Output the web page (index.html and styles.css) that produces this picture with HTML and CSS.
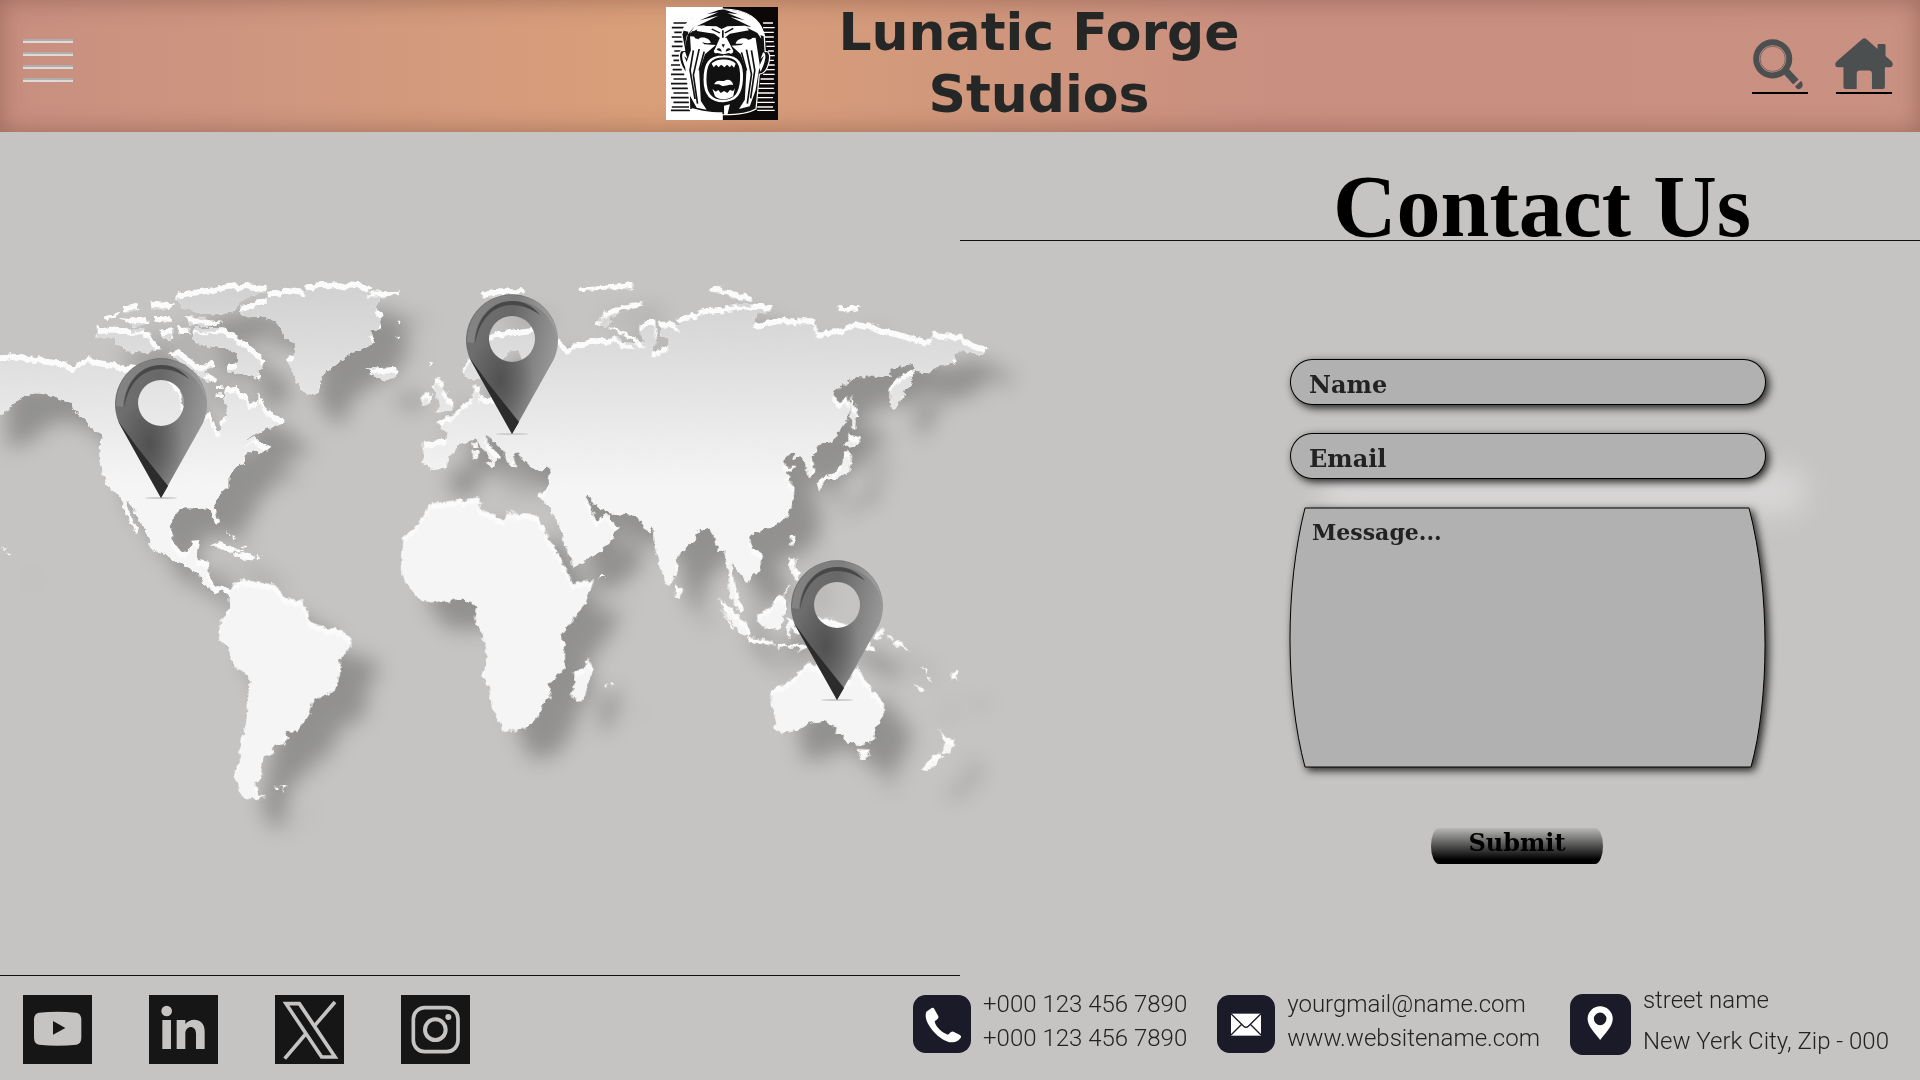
FILE: index.html
```html
<!DOCTYPE html>
<html lang="en">
<head>
<meta charset="utf-8">
<meta name="viewport" content="width=device-width, initial-scale=1">
<title>Contact Us</title>
<link rel="stylesheet" href="styles.css">
</head>
<body>
<header class="site-header">
  <button class="menu" type="button" aria-label="Menu"><span class="bar"></span><span class="bar"></span><span class="bar"></span><span class="bar"></span></button>
  <div class="brand">
    <svg class="logo" viewBox="0 0 270 339" preserveAspectRatio="none" aria-hidden="true">
      <path fill="#fff" d="M0 0h270v339H0z"/><path fill="#0c0807" d="M137 0h133v339H137z"/>
      <path stroke="#111" stroke-width="5" d="M18 48h34M14 62h36M20 76h28M14 90h32M20 104h25M14 118h26M20 132h16M14 146h18M18 160h14M12 174h22M16 188h22M12 202h32M18 216h36M12 230h42M14 244h42M18 258h38M12 272h46M18 286h40M14 300h44M12 310h46"/>
      <path stroke="#fff" stroke-width="4" d="M234 48h24M234 62h28M236 76h24M238 90h22M240 104h20M242 118h20M246 132h14M248 146h14M248 160h12M246 174h16M238 188h24M234 202h28M228 216h32M226 230h36M222 244h38M220 258h42M220 272h38M220 286h42M220 300h38M220 310h42"/>
      <path fill="#111" stroke="#fff" stroke-width="3" d="M38 82C45 40 80 6 137 6c56 0 94 30 100 84l2 44c12-4 14 20 6 44-4 16-12 22-20 24l-8 104c-30 22-122 24-160 2l-2-106c-16-10-28-50-20-70l10-2z"/>
      <path fill="#fff" d="M46 134c-12 0-8 30 6 60l2-18-10-28 8 8zM234 136c10 2 6 30-6 58l-4-14 12-34-8 10z"/>
      <path fill="#fff" d="M38 70C62 20 98 4 134 6L98 22l28-6-44 24 44-14-52 32 22-4-38 24 12-22-20 30-6 40 10-52z"/>
      <path fill="#fff" d="M240 90C226 30 190 8 142 8l32 14-26-4 42 22-34-10 50 30-20-4 38 24-12-18 18 34 6 36-8-48z"/>
      <path fill="#fff" d="M78 56l44 2 12 8 14-8 44-2 8 14-46 10-18 18-20-18-42-8z"/>
      <path fill="#fff" d="M58 88l20 2 14 22 28 2-26 28-14 50 4 90 14 26-24-6-20-44-8-80 14-48zM216 92l-20 2-14 20-24 2 22 26 14 46-4 90-14 28 26-8 14-48 10-76z"/>
      <path fill="none" stroke="#111" stroke-width="4" d="M66 130l-8 60 12 86M80 126l-14 78 10 86M92 134l-12 56M206 130l8 60-10 84M194 128l12 74-10 88M182 136l12 54M110 66l20 12M162 64l-20 14M137 70v24"/>
      <path fill="#111" d="M62 72l50 12 16 20-8 8-50-18zM214 74l-52 10-14 20 8 8 50-16z"/>
      <path fill="#fff" d="M78 96c10-10 28-2 30 12-14 2-24-2-30-12zM198 98c-10-10-28-2-30 12 14 2 24-2 30-12z"/>
      <path fill="#fff" d="M130 92l16 0 14 34c6 10-2 18-8 12l-14 4-14-4c-6 4-12-4-6-12z"/><path fill="#111" d="M122 128c4-8 12-4 12 6zM156 128c-4-8-12-4-12 6zM134 112l4 10 4-10z"/>
      <path fill="#111" stroke="#fff" stroke-width="7" d="M138 148c36-2 46 24 44 70-2 42-14 62-44 64-30 0-44-22-44-64 0-46 10-70 44-70z"/>
      <path fill="#fff" d="M110 170c10-16 46-18 58 0l-4 12-6-8-4 7-7-8-6 8-8-8-6 8-6-8-6 8zM112 246l8 8 6-5 6 9 8-6 8 6 6-9 8 3 4-8-4 24c-14 12-34 12-44 0zM116 232c6-18 18-8 24-10 10-8 20-2 22 12-12-4-20 6-28 2-6-6-12-4-18-4z"/>
      <path fill="#fff" d="M64 304c20 6 36 12 72 12v10c-36 0-66-6-80-18zM140 296l14-4-6 32h-8z"/>
    </svg>
    <h1 class="brand-name">Lunatic Forge<br>Studios</h1>
  </div>
  <nav class="tools">
    <a class="tool" href="#search" aria-label="Search"><svg class="tool-icon" viewBox="0 0 174 154" aria-hidden="true"><g transform="translate(5 3)"><circle cx="60" cy="60" r="50" fill="none" stroke="#4c4f50" stroke-width="18"/><circle cx="60" cy="60" r="38" fill="none" stroke="#4c4f50" stroke-width="2"/><path d="M100 97l30 33" stroke="#4c4f50" stroke-width="22"/><path fill="#4c4f50" d="M128 143l17-16c8 4 8 22-4 24-8 2-13-4-13-8z"/></g></svg></a>
    <a class="tool" href="#home" aria-label="Home"><svg class="tool-icon" viewBox="0 0 174 154" aria-hidden="true"><path fill="#4c4f50" d="M82 3q6-5 12 0l34 30V22q0-4 4-4h16q4 0 4 4v32l19 17q5 6 1 15-3 2-8 2h-14v60q0 6-6 6h-33v-46q0-10-10-10H75q-10 0-10 10v46H31q-6 0-6-6V88H9q-5 0-8-3-3-9 3-14z"/></svg></a>
  </nav>
</header>

<main class="content">
  <section class="map-panel">
    <svg class="map" viewBox="0 132 960 843" aria-hidden="true">
      <defs>
        <linearGradient id="land" gradientUnits="userSpaceOnUse" x1="0" y1="80" x2="0" y2="660"><stop offset="0" stop-color="#d2d2d2"/><stop offset="1" stop-color="#f5f5f5"/></linearGradient>
        <linearGradient id="pin-body" x1="0" y1=".2" x2="1" y2=".5"><stop offset="0" stop-color="#707070"/><stop offset=".45" stop-color="#686868"/><stop offset="1" stop-color="#9c9c9c"/></linearGradient>
        <radialGradient id="pin-shade" cx=".38" cy=".62" r=".36"><stop offset="0" stop-color="#4c4c4c" stop-opacity=".8"/><stop offset="1" stop-color="#4c4c4c" stop-opacity="0"/></radialGradient>
        <filter id="relief" filterUnits="userSpaceOnUse" x="-60" y="200" width="1160" height="680" color-interpolation-filters="sRGB">
          <feTurbulence type="fractalNoise" baseFrequency=".16" numOctaves="2" seed="4" result="noise"/>
          <feDisplacementMap in="SourceGraphic" in2="noise" scale="7" xChannelSelector="R" yChannelSelector="G" result="shape"/>
          <feOffset in="shape" dx="-1" dy="6" result="lower"/>
          <feComposite in="lower" in2="shape" operator="in" result="face"/>
          <feFlood flood-color="#fbfbfb"/><feComposite in2="shape" operator="in" result="edge"/>
          <feGaussianBlur in="shape" stdDeviation="10"/><feOffset dx="27" dy="28" result="soft"/>
          <feFlood flood-color="#000" flood-opacity=".26"/><feComposite in2="soft" operator="in" result="shadow"/>
          <feMerge><feMergeNode in="shadow"/><feMergeNode in="edge"/><feMergeNode in="face"/></feMerge>
        </filter>
        <g id="pin">
          <ellipse cx="0" cy="0" rx="16" ry="1" fill="#ccc"/>
          <path fill="url(#pin-body)" fill-rule="evenodd" d="M0 0L-42-75A46 46 0 1 1 42-75ZM23-95a23 23 0 1 0-46 0a23 23 0 1 0 46 0z"/>
          <path fill="url(#pin-shade)" fill-rule="evenodd" d="M0 0L-42-75A46 46 0 1 1 42-75ZM23-95a23 23 0 1 0-46 0a23 23 0 1 0 46 0z"/>
          <path fill="#2c2c2c" d="M0 0L-43-77-24-51 7-12z"/>
          <path fill="#fff" fill-opacity=".14" d="M-45-92C-44-121-25-139 0-139s42 17 45 42C40-121 22-133 0-133c-20 0-36 15-38 42z"/>
          <path fill="#484848" d="M-37-90C-36-118-18-133 0-133c12 0 22 6 28 14-8-6-18-10-28-10-16 0-32 11-37 39z"/>
        </g>
      </defs>
      <g filter="url(#relief)">
        <g transform="translate(0 260) scale(.3333)" fill="url(#land)">
          <path d="M-60 300L40 278 100 290 200 305 215 320 260 290 300 300 380 315 430 320 500 340 540 390 550 430 580 470 630 460 650 515 665 510 660 480 685 465 680 440 670 420 675 385 710 380 740 410 750 435 775 425 775 400 800 440 815 465 850 475 850 490 800 510 760 525 735 545 765 530 780 545 815 560 780 585 760 570 735 590 735 612 705 620 688 650 688 680 650 715 645 735 657 785 648 795 632 750 620 742 580 745 545 745 518 770 513 815 525 860 545 875 570 868 578 842 598 840 592 870 590 900 628 905 628 945 645 980 665 975 695 995 690 1012 665 990 645 1000 610 970 596 940 530 905 450 860 445 830 420 780 385 725 375 730 400 780 418 820 405 815 380 765 365 725 350 700 330 690 310 650 298 600 300 545 308 530 280 510 240 465 220 450 215 430 150 405 110 400 70 410 30 440 10 460-60 480z"/>
          <path d="M720 140L760 125 800 110 805 92 870 85 920 90 912 75 960 66 1080 68 1120 80 1100 95 1200 92 1195 102 1140 115 1130 145 1150 160 1140 185 1145 205 1110 215 1125 245 1090 265 1040 290 1000 325 975 330 965 370 948 408 910 395 885 355 860 295 885 280 885 250 855 235 848 210 825 180 780 170 740 172 725 160z"/>
          <path d="M560 92L640 82 700 70 800 78 800 92 730 120 700 150 680 165 620 165 560 150 525 120 535 100zM290 200l60 0 90 10 30 40 15 20-85 10-40-20-20-25-50 0zM310 170l50-15-5 12-35 14zM365 140l48-8 2 18-45 8zM360 175l80-6 5 22-45 6zM450 125l70 4-10 22-50-5zM460 168h50v20h-46zM560 168l100 14-8 16-84-3zM475 210l45-6v32h-32zM530 200h38v22h-34z"/>
          <path d="M580 205h90l60 35 30 25 40 40-10 20-15 5 5 32-40-17-30-5-30-5v-20l35-5-5-25-30-20-80-10-25-20zM505 285l35-15 60 50 40-20 5 20-35 15 40 25-30 5-40-35zM1103 325h27l60-5v25l-40 17-40-17zM648 375h20v12h-20zM650 400h16v14h-16z"/>
          <path d="M625 860l35-14 50 22 28 8-48 2-40-18zM698 884l42-6 27 14-37 10zM773 889h12v8h-12zM680 812l12 14-3 3zM700 825l8 12-6 4zM720 857h24v5h-24zM0 863l20 6-4 4zM22 878l12 6-6 6zM1188 185h10v8h-10zM1190 230h10v7h-10z"/>
        </g>
        <g transform="translate(400 260) scale(.3954 .3333)" fill="url(#land)">
          <path d="M60 545L115 540 118 520 92 485 130 470 160 430 185 415 185 380 200 375 200 410 230 415 260 410 300 370 330 320 390 300 440 275 500 258 555 245 600 250 530 205 560 210 620 250 605 210 620 180 645 180 650 230 640 275 680 255 680 235 660 228 655 185 690 185 712 210 700 175 740 160 780 145 830 138 880 130 940 135 935 155 900 160 895 190 960 175 1050 175 1055 215 1120 205 1150 180 1200 195 1270 220 1340 240 1350 215 1420 225 1450 250 1488 262 1470 285 1420 270 1400 285 1408 305 1360 320 1340 340 1300 335 1300 310 1260 320 1235 335 1240 350 1150 348 1095 400 1110 430 1130 410 1140 440 1130 480 1095 545 1065 550 1040 590 1050 640 1035 655 1025 610 1010 590 995 600 1000 575 985 580 968 600 975 620 1000 620 978 640 998 680 995 720 980 770 955 795 905 815 882 830 890 865 918 885 908 930 878 968 860 940 840 905 845 970 870 1050 860 1060 835 1010 830 930 820 870 805 880 800 845 780 800 750 815 745 840 700 890 698 940 680 978 660 930 645 860 642 800 630 820 600 768 530 760 520 750 490 735 478 705 470 712 490 760 495 780 525 765 530 780 550 800 540 835 500 880 440 922 430 890 400 790 375 735 350 705 370 690 382 625 340 630 310 600 300 575 285 590 295 625 280 615 262 575 225 530 215 515 218 545 255 590 235 620 215 610 235 600 205 560 190 535 155 550 125 585 120 620 85 630 60 610z"/>
          <path d="M160 320L175 300 215 230 250 215 340 200 400 235 420 265 440 250 480 238 555 230 558 248 500 260 440 278 390 302 340 330 310 300 300 270 280 270 260 300 240 345 190 360 165 350zM90 355h15l5 30 25 45-5 20-40 8 10-18-5-30-15-30zM65 395l17 10-4 25-26 10 3-25zM185 548h10v16h-10zM184 572h12l-2 26h-9zM203 98l47-10 65 0-5 14-50 3-45 9zM450 84l50-5 90-10v16l-90 5-45 4zM495 190l25-35 40-17 55-12v10l-55 15-28 24-7 30-25-7zM778 90l22-14 25 12 65 20v18l-40-10-50-16zM1105 138h60l-5 18-50-3zM72 306h8v12h-8z"/>
          <path d="M1302 328l-12 52-20 30-22 38-10-28v-40l30-32zM1142 403l10 37 8 32-9-2 1 37-10-7-2-50zM1138 520l28 15-10 22-32 4zM1128 568l13 22-5 42-26 20-35 9-14 32-8-22 16-22 30-10 20-30zM990 828l10-1-6 34-10-10zM986 893h15l-2 37 12 10-5 22-22-32zM963 1015l22-42-2 18zM697 973l16 17-4 27-13-5zM505 948h12v6h-12z"/>
        </g>
        <g transform="translate(180 540) scale(.3333)" fill="#f5f5f5">
          <path d="M755-110L897-128 903-95 974-55 980-85 1075-72 1099-20 1128 30 1180 130 1243 118 1215 190 1140 285 1155 320 1155 385 1105 430 1112 470 1088 490 1070 530 1035 565 972 575 960 545 935 490 928 440 907 405 922 345 915 300 883 240 890 195 857 188 850 173 800 185 742 190 700 155 665 110 665 60 672-10 719-50 731-80zM1225 350l14 35-15 45-14 50-20 5-15-25 10-30-3-35 28-10z"/>
          <path d="M150 165L165 130 200 115 215 125 260 130 285 135 320 175 365 180 380 210 385 240 430 262 470 262 510 290 512 315 480 360 475 420 460 455 400 480 390 520 350 575 312 572 325 595 310 615 280 620 275 640 255 650 240 685 248 700 225 730 235 762 255 770 225 780 185 765 165 720 165 690 180 665 180 640 185 600 200 540 210 415 165 380 140 320 118 290 120 250 150 205zM284 738h14v10h-14zM303 736h16l-10 18zM1275 436h8v7h-8zM1292 430h8v7h-8z"/>
        </g>
        <g transform="translate(600 520) scale(.3333)" fill="#f5f5f5">
          <path d="M510 545L515 510 560 490 590 460 625 430 655 440 690 470 750 480 775 435 790 475 825 515 852 550 852 580 830 620 820 662 780 675 740 665 730 645 705 640 712 625 690 615 670 602 630 610 590 628 545 638 522 625 530 610 520 570zM773 688h36l-3 18-13 16-14-12zM1014 628l22 22 30 12-20 38-18-3 7-27zM1023 693l6 18-44 42-25-5 25-28z"/>
          <path d="M353 236l27 14 50 55 20 20-5 27-26-17-36-45zM475 285l25-15 40-46 18 16-5 45-15 48-48-12-15-16zM446 350l70 11 6 15-74-9zM530 374h26v9h-26zM560 374h52v9h-52zM588 398l28-24 4 8zM560 288l22 22 25 30-15 6-22-30-1 35-8-4zM650 293l50 5 60 25 40 27 30 47-30-5-40-20-40-30-40-20zM820 353l26-30 4 17-18 20zM858 341l22 18-12 1zM876 368l24-5 30 36-18-12zM960 436l20 12 4 16zM982 472l8-2 4 22zM938 486l34 26-12 4zM1050 458l22-6-2 26-14 2zM358 262l44 62-6 4z"/>
        </g>
      </g>
      <use href="#pin" x="161" y="498"/>
      <use href="#pin" x="512" y="434"/>
      <use href="#pin" x="837" y="700"/>
    </svg>
  </section>

  <section class="contact-panel">
    <h2 class="contact-title">Contact Us</h2>
    <form class="contact-form">
      <input class="field" type="text" name="name" placeholder="Name" aria-label="Name">
      <input class="field" type="email" name="email" placeholder="Email" aria-label="Email">
      <div class="message">
        <svg class="message-shape" viewBox="0 0 476 261" preserveAspectRatio="none" aria-hidden="true"><path fill="#b1b1b1" stroke="#000" d="M15 1H459C481 85 479 195 461 260H15C-5 185-5 80 15 1z"/></svg>
        <textarea class="message-input" name="message" placeholder="Message..." aria-label="Message..."></textarea>
      </div>
      <button class="submit" type="submit">Submit</button>
    </form>
  </section>
</main>

<footer class="site-footer">
  <nav class="social">
    <a class="tile" href="#youtube" aria-label="YouTube"><svg viewBox="0 0 207 207"><path fill="#c6c4c2" d="M48 53q56-6 112 0 14 2 15 20v56q-1 18-15 20-56 6-112 0-14-2-15-20V73q1-18 15-20z"/><path fill="#161616" d="M90 78l37 21-37 20z"/></svg></a>
    <a class="tile" href="#linkedin" aria-label="LinkedIn"><svg viewBox="0 0 207 207" fill="#c6c4c2"><circle cx="53" cy="48" r="16"/><path d="M40 75h26v87H40zM83 75h26v12c14-20 58-20 58 22v53h-26v-46c0-28-32-26-32 0v46H83z"/></svg></a>
    <a class="tile" href="#x" aria-label="X"><svg viewBox="0 0 207 207" fill="none" stroke="#c6c4c2"><path stroke-width="11" d="M180 21l-63 73M92 117L29 191"/><path stroke-width="11" d="M33 26h40l107 160h-40z"/></svg></a>
    <a class="tile" href="#instagram" aria-label="Instagram"><svg viewBox="0 0 207 207" fill="none" stroke="#c6c4c2"><rect x="37" y="38" width="134" height="132" rx="34" stroke-width="11"/><circle cx="103" cy="104" r="31" stroke-width="12"/><circle cx="142" cy="66" r="9" fill="#c6c4c2" stroke="none"/></svg></a>
  </nav>
  <address class="details">
    <div class="detail">
      <svg class="badge" viewBox="0 0 174 174" aria-hidden="true"><rect width="174" height="174" rx="38" fill="#1a1a28"/><path fill="#fff" d="M40 50l16-11q5-3 8 3l12 22q2 5-3 9l-8 6c2 16 24 36 40 40l8-7q5-4 10-1l18 9q6 4 2 9-12 14-25 13C86 144 26 84 40 50z"/></svg>
      <p class="lines"><a href="tel:+0001234567890">+000 123 456 7890</a><a href="tel:+0001234567890">+000 123 456 7890</a></p>
    </div>
    <div class="detail">
      <svg class="badge" viewBox="0 0 174 174" aria-hidden="true"><rect width="174" height="174" rx="38" fill="#1a1a28"/><path fill="#fff" d="M42 56h90v66H42z"/><path fill="none" stroke="#1a1a28" stroke-width="4" d="M42 56l38 38q7 6 14 0l38-38M42 120l32-32M132 120l-32-32"/></svg>
      <p class="lines"><a href="mailto:yourgmail@name.com">yourgmail@name.com</a><a href="#website">www.websitename.com</a></p>
    </div>
    <div class="detail">
      <svg class="badge badge-large" viewBox="0 0 184 184" aria-hidden="true"><rect width="184" height="184" rx="38" fill="#1a1a28"/><path fill="#fff" fill-rule="evenodd" d="M91 139C77 120 53 98 53 75a38 38 0 0 1 76 0c0 23-24 45-38 64zM110 75a19 19 0 1 0-38 0 19 19 0 0 0 38 0z"/></svg>
      <p class="lines lines-loose"><span>street name</span><span>New Yerk City, Zip - 000</span></p>
    </div>
  </address>
</footer>
</body>
</html>
```

FILE: styles.css
```css
* { box-sizing: border-box; }

body {
  margin: 0;
  min-height: 100vh;
  display: flex;
  flex-direction: column;
  overflow-x: hidden;
  background: #c5c4c2;
  color: #222;
  font-family: Roboto, "Noto Sans", sans-serif;
}

h1, h2, p { margin: 0; }
a { color: inherit; text-decoration: none; }
svg { display: block; overflow: visible; }

/* Header */
.site-header {
  display: grid;
  grid-template-columns: 1fr auto 1fr;
  align-items: center;
  min-height: 132px;
  padding: 0 28px 0 23px;
  background: linear-gradient(90deg, #c88f80 0, #cf977f 15%, #d99f79 34%, #d39a7b 45%, #c98f80 66%, #c99182 100%);
  box-shadow: inset 0 0 24px rgba(90, 50, 40, .4);
}

.menu {
  display: flex;
  flex-direction: column;
  gap: 9px;
  width: 50px;
  padding: 0;
  margin-bottom: 12px;
  border: 0;
  background: none;
}

.bar {
  height: 4px;
  border-top: 2px solid #b0aeac;
  background: #dedad8;
}

.brand {
  display: flex;
  align-items: center;
  gap: 17px;
  padding: 0 0 6px 34px;
}

.logo { width: 112px; height: 113px; overflow: hidden; }

.brand-name {
  min-width: 488px;
  color: #252726;
  font: bold 52px/62px "DejaVu Sans", sans-serif;
  text-align: center;
}

.tools {
  display: flex;
  justify-content: flex-end;
  gap: 28px;
}

.tool {
  display: flex;
  justify-content: center;
  width: 56px;
  padding-bottom: 3px;
  border-bottom: 2px solid #000;
}

.tool-icon { flex: none; width: 58px; height: 51px; }

/* Main area */
.content {
  flex: 1;
  display: grid;
  grid-template-columns: 1fr 1fr;
}

.map-panel { border-bottom: 1px solid #111; }
.map { width: 100%; height: auto; }

.contact-title {
  padding: 42px 0 0 204px;
  border-bottom: 1px solid #111;
  color: #000;
  font: bold 88px/66px "Liberation Serif", serif;
  text-align: center;
}

.contact-form {
  position: relative;
  display: flex;
  flex-direction: column;
  gap: 28px;
  width: 476px;
  margin: 118px auto 0;
  left: 88px;
}

.contact-form::before {
  content: "";
  position: absolute;
  z-index: -1;
  top: 108px;
  left: 30px;
  right: -40px;
  height: 48px;
  border-radius: 20px;
  background: #d8d6d6;
  filter: blur(14px);
}

.field {
  width: 100%;
  height: 46px;
  padding: 4px 18px 0;
  border: 1px solid #000;
  border-radius: 22px / 23px;
  background: #b1b1b1;
  box-shadow: 3px 3px 8px rgba(0, 0, 0, .85);
}

.field, .message-input, .submit {
  color: #222;
  font: bold 24px/28px "DejaVu Serif", serif;
}

.field::placeholder, .message-input::placeholder { color: #222; opacity: 1; }

.message { display: grid; }

.message-shape, .message-input {
  grid-area: 1 / 1;
  width: 100%;
  height: 261px;
}

.message-shape { filter: drop-shadow(3px 3px 4px rgba(0, 0, 0, .85)); }

.message-input {
  z-index: 1;
  padding: 11px 22px;
  border: 0;
  background: none;
  font-size: 22px;
  resize: none;
}

.submit {
  width: 172px;
  height: 36px;
  margin: 32px 0 0 141px;
  padding: 0 0 6px;
  border: 0;
  border-radius: 8px / 18px;
  background: linear-gradient(#b8b8b7, #000 88%);
  color: #000;
}

/* Footer */
.site-footer {
  display: flex;
  justify-content: space-between;
  align-items: flex-start;
  padding: 4px 31px 13px 23px;
}

.social { display: flex; gap: 57px; padding-top: 15px; }

.tile {
  width: 69px;
  height: 69px;
  background: #161616;
}

.details {
  display: flex;
  align-items: center;
  gap: 30px;
  font-style: normal;
}

.detail { display: flex; align-items: center; gap: 12px; }
.badge { flex: none; width: 58px; height: 58px; }
.badge-large { width: 61px; height: 61px; }

.lines {
  display: flex;
  flex-direction: column;
  padding-bottom: 6px;
  font-size: 24px;
  font-weight: 300;
  line-height: 34px;
}

.lines-loose { line-height: 41px; }
```
